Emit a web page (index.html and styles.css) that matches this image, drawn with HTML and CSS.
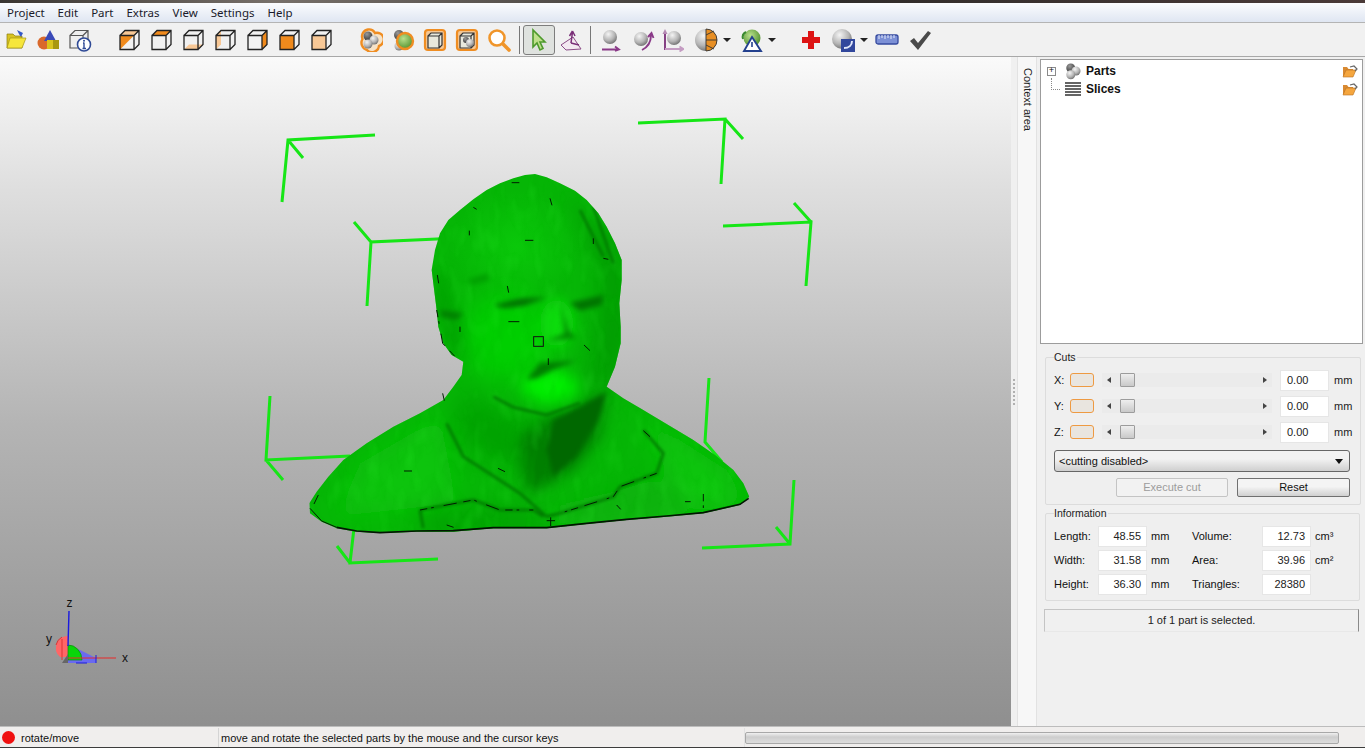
FILE: index.html
```html
<!DOCTYPE html>
<html lang="en">
<head>
<meta charset="utf-8">
<title>Netfabb</title>
<link rel="stylesheet" href="styles.css">
</head>
<body>
<svg class="defs" width="0" height="0">
  <defs>
    <radialGradient id="ball" cx="38%" cy="30%" r="75%"><stop offset="0" stop-color="#f4f4f4"/><stop offset=".6" stop-color="#b4b4b4"/><stop offset="1" stop-color="#6c6c6c"/></radialGradient>
    <radialGradient id="dark" cx="38%" cy="30%" r="75%"><stop offset="0" stop-color="#9a9a9a"/><stop offset="1" stop-color="#333"/></radialGradient>
    <radialGradient id="gball" cx="40%" cy="35%" r="70%"><stop offset="0" stop-color="#b9e08c"/><stop offset="1" stop-color="#4f8f2c"/></radialGradient>
    <radialGradient id="brow" cx="50%" cy="50%" r="50%"><stop offset="0" stop-color="#0ac80a"/><stop offset="1" stop-color="#0ac80a" stop-opacity="0"/></radialGradient>
    <linearGradient id="vp" x1="0" y1="0" x2="0" y2="1"><stop offset="0" stop-color="#fafafa"/><stop offset=".2" stop-color="#dedede"/><stop offset=".55" stop-color="#b4b4b4"/><stop offset="1" stop-color="#8f8f8f"/></linearGradient>
    <filter id="b6" x="-20%" y="-20%" width="140%" height="140%"><feGaussianBlur stdDeviation="38"/></filter>
    <filter id="b4" x="-20%" y="-20%" width="140%" height="140%"><feGaussianBlur stdDeviation="20"/></filter>
    <filter id="b2" x="-20%" y="-20%" width="140%" height="140%"><feGaussianBlur stdDeviation="8"/></filter>
    <filter id="b1" x="-10%" y="-10%" width="120%" height="120%"><feGaussianBlur stdDeviation="4"/></filter>
    <filter id="mott-d" x="0" y="0" width="100%" height="100%">
      <feTurbulence type="fractalNoise" baseFrequency=".03 .012" numOctaves="2" seed="11"/>
      <feColorMatrix values="0 0 0 0 0  0 0 0 0 .45  0 0 0 0 0  2.600 0 0 0 -1.250"/>
    </filter>
    <filter id="mott-l" x="0" y="0" width="100%" height="100%">
      <feTurbulence type="fractalNoise" baseFrequency=".025 .012" numOctaves="2" seed="23"/>
      <feColorMatrix values="0 0 0 0 .03  0 0 0 0 .88  0 0 0 0 .03  0 2.600 0 0 -1.250"/>
    </filter>
    <symbol id="wire" viewBox="0 0 24 24">
      <path d="M3 7.500H17V21.500H3ZM3 7.500L8 2.500H22V16.500L17 21.500M17 7.500L22 2.500" fill="none" stroke="#222" stroke-width="1.300"/>
    </symbol>
    <symbol id="trio" viewBox="0 0 24 24">
      <circle cx="9" cy="8" r="6" fill="url(#dark)"/><circle cx="16" cy="12" r="6" fill="url(#ball)"/><circle cx="9" cy="17" r="6" fill="url(#ball)"/>
    </symbol>
    <symbol id="fold" viewBox="0 0 16 14">
      <path d="M1 3H5L6.500 5H11V12H1Z" fill="#d98a32"/><path d="M1 13L4 6H14L11 13Z" fill="#f5a63e" stroke="#b8701e" stroke-width=".6"/><path d="M8 3L12 2L15 5L13 7" fill="none" stroke="#666" stroke-width="1.200"/>
    </symbol>
  </defs>
</svg>

<div class="titlestrip"></div>

<nav class="menubar">
  <span>Project</span><span>Edit</span><span>Part</span><span>Extras</span><span>View</span><span>Settings</span><span>Help</span>
</nav>

<div class="toolbar">
  <div class="tool"><svg viewBox="0 0 24 24"><path d="M3 6H9L11 8H18V20H3Z" fill="#d8c322" stroke="#8b7b10" stroke-width=".7"/><path d="M3 20L6 10H22L18 20Z" fill="#f6e63c" stroke="#a59414" stroke-width=".7"/><path d="M13 2L19 5L17 9L15 6Z" fill="#3458c8"/></svg></div>
  <div class="tool"><svg viewBox="0 0 24 24"><circle cx="8" cy="15" r="6.500" fill="#d9692c"/><path d="M14 2L20 13H8Z" fill="#3a4ab8"/><path d="M11 12H23V21H11Z" fill="#d9c41e"/><path d="M17 12H23V21H17Z" fill="#a8970f"/></svg></div>
  <div class="tool"><svg viewBox="0 0 24 24"><path d="M2 7.500H15V20H2ZM2 7.500L7 2.500H20V15L15 20M15 7.500L20 2.500" fill="#eee" stroke="#555" stroke-width="1.200"/><circle cx="16" cy="16.500" r="6.500" fill="#fff" stroke="#2f4a96" stroke-width="1.600"/><path d="M16 15V20.500M15 15H16.500M14.500 20.500H18" stroke="#2f4a96" stroke-width="1.400"/><circle cx="16" cy="12.800" r="1" fill="#2f4a96"/></svg></div>

  <div class="tool gap-a"><svg viewBox="0 0 24 24"><path d="M3 7.500L8 2.500H22L17 7.500Z" fill="#f8c896"/><path d="M3 7.500H17L3 21.500Z" fill="#f08a1c"/><use href="#wire"/></svg></div>
  <div class="tool"><svg viewBox="0 0 24 24"><path d="M3 7.500L8 2.500H22L17 7.500Z" fill="#f08a1c"/><use href="#wire"/></svg></div>
  <div class="tool"><svg viewBox="0 0 24 24"><path d="M3 21.500L8 16.500H22L17 21.500Z" fill="#f8c896"/><use href="#wire"/></svg></div>
  <div class="tool"><svg viewBox="0 0 24 24"><path d="M3 7.500L8 2.500V16.500L3 21.500Z" fill="#f8c896"/><use href="#wire"/></svg></div>
  <div class="tool"><svg viewBox="0 0 24 24"><path d="M17 7.500L22 2.500V16.500L17 21.500Z" fill="#f08a1c"/><use href="#wire"/></svg></div>
  <div class="tool"><svg viewBox="0 0 24 24"><path d="M3 7.500H17V21.500H3Z" fill="#f08a1c"/><use href="#wire"/></svg></div>
  <div class="tool"><svg viewBox="0 0 24 24"><path d="M3 7.500H17V21.500H3Z" fill="#f8c896"/><use href="#wire"/></svg></div>

  <div class="tool gap-b"><svg viewBox="0 0 24 24"><path d="M9 1.500A7 7 0 0 1 16 5A6.500 6.500 0 0 1 20 18A7 7 0 0 1 8 22A7.500 7.500 0 0 1 3.500 11A7 7 0 0 1 9 1.500Z" fill="#f6e3c8" stroke="#ef8d22" stroke-width="2.400"/><circle cx="9" cy="8" r="4.500" fill="url(#dark)"/><circle cx="15" cy="12" r="4.500" fill="url(#ball)"/><circle cx="9" cy="16" r="4.500" fill="url(#ball)"/></svg></div>
  <div class="tool"><svg viewBox="0 0 24 24"><circle cx="8" cy="7" r="5" fill="url(#dark)"/><circle cx="8" cy="18" r="4.500" fill="url(#ball)"/><circle cx="14" cy="13" r="8" fill="url(#gball)" stroke="#ef8d22" stroke-width="2.400"/></svg></div>
  <div class="tool"><svg viewBox="0 0 24 24"><rect x="2" y="2" width="20" height="20" rx="3" fill="#f4c794" stroke="#ef8d22" stroke-width="2.200"/><path d="M5 8H16V20H5ZM5 8L8 5H19V17L16 20M16 8L19 5" fill="#e8e8dc" stroke="#333" stroke-width="1.200"/></svg></div>
  <div class="tool"><svg viewBox="0 0 24 24"><rect x="2" y="2" width="20" height="20" rx="3" fill="#f4c794" stroke="#ef8d22" stroke-width="2.200"/><path d="M5 8H16V20H5ZM5 8L8 5H19V17L16 20M16 8L19 5" fill="#e8e8dc" stroke="#333" stroke-width="1.200"/><circle cx="11" cy="12" r="3" fill="url(#dark)"/><circle cx="15" cy="15" r="4" fill="url(#ball)"/></svg></div>
  <div class="tool"><svg viewBox="0 0 24 24"><circle cx="10" cy="10" r="7.500" fill="#fff" stroke="#f0952a" stroke-width="2.600"/><path d="M16 16L22 22" stroke="#f0952a" stroke-width="3.600" stroke-linecap="round"/></svg></div>

  <div class="sep"></div>
  <div class="tool active"><svg viewBox="0 0 24 24"><path d="M6 2V19L10 15L13 22L16 20.500L13 14H18Z" fill="#bfe08c" stroke="#4d9a2c" stroke-width="1.600"/></svg></div>
  <div class="tool"><svg viewBox="0 0 24 24"><path d="M2 17L14 9L22 21L7 22Z" fill="#f3e9f1" stroke="#8a4b86" stroke-width="1"/><path d="M12 15L13.500 4M13.500 3L10.500 8M13.500 3L16 8M12 15L20 17" fill="none" stroke="#7a2f78" stroke-width="1.500"/></svg></div>
  <div class="sep sep-b"></div>

  <div class="tool t-a"><svg viewBox="0 0 24 24"><circle cx="12" cy="9" r="7" fill="url(#ball)"/><path d="M4 21.500H21M17 18.500L21 21.500L17 23" fill="none" stroke="#8a3a88" stroke-width="1.800"/></svg></div>
  <div class="tool t-b"><svg viewBox="0 0 24 24"><circle cx="10" cy="11" r="7" fill="url(#ball)"/><path d="M20 7C20 14 17 19 11 22M17 9L20.500 5L22.500 10" fill="none" stroke="#8a3a88" stroke-width="1.900"/></svg></div>
  <div class="tool t-c"><svg viewBox="0 0 24 24"><circle cx="14" cy="10" r="7" fill="url(#ball)"/><path d="M5 3V21H14" fill="none" stroke="#7a2f78" stroke-width="1.800"/><path d="M5 1L2.500 6H7.500Z" fill="#b58ab3"/><path d="M5 21H23M19.500 18.500L23.500 21L19.500 23.500" fill="none" stroke="#c49cc2" stroke-width="1.800"/></svg></div>
  <div class="tool t-d"><svg viewBox="0 0 24 24"><circle cx="12" cy="12" r="11" fill="url(#ball)"/><path d="M12 1A11 11 0 0 1 12 23Z" fill="#e88f24" stroke="#333" stroke-width=".9"/><path d="M12 7L20 3M12 12H23M12 17L20 21" stroke="#333" stroke-width=".9"/></svg></div>
  <span class="caret c-a"></span>
  <div class="tool t-e"><svg viewBox="0 0 24 24"><circle cx="13" cy="10" r="8.500" fill="url(#gball)"/><path d="M7 4A6 6 0 0 0 4 11" fill="none" stroke="#3b8a30" stroke-width="2"/><path d="M13 9L22 23H5Z" fill="#fff" stroke="#23408e" stroke-width="1.900"/><path d="M13 14V19" stroke="#23408e" stroke-width="1.600"/></svg></div>
  <span class="caret c-a"></span>
  <div class="tool t-f"><svg viewBox="0 0 24 24"><path d="M9 3H15V9H21V15H15V21H9V15H3V9H9Z" fill="#dd1414"/></svg></div>
  <div class="tool t-g"><svg viewBox="0 0 24 24"><circle cx="10" cy="11" r="10" fill="url(#ball)"/><path d="M9 11H23V24H9Z" fill="#31479c"/><path d="M12 20C17 20 20 17 20 13" fill="none" stroke="#dfe6fa" stroke-width="2"/></svg></div>
  <span class="caret"></span>
  <div class="tool t-h"><svg viewBox="0 0 24 24"><rect x="1" y="7" width="22" height="9" rx="2" fill="#7c90d6" stroke="#34499e" stroke-width="1.300"/><path d="M4 7V11M7 7V10M10 7V11M13 7V10M16 7V11M19 7V10" stroke="#e6ebfa" stroke-width="1"/></svg></div>
  <div class="tool t-i"><svg viewBox="0 0 24 24"><path d="M2 13L6 10L10 15L20 3L23 5L10 22Z" fill="#4a4a4a"/></svg></div>
</div>

<main class="main">
  <section class="viewport">
    <svg class="scene" viewBox="0 57 1011 669" preserveAspectRatio="none">
      <rect x="0" y="57" width="1011" height="669" fill="url(#vp)"/>

      <g class="frame">
        <path d="M375 135L288 140L282 202M288 140L303 158"/>
        <path d="M638 123L725 119L721 184M725 119L743 139"/>
        <path d="M723 226L811 222L806 286M811 222L794 203"/>
        <path d="M459 238L371 242L367 306M371 242L354 222"/>
        <path d="M270 396L266 460L350 456M266 460L283 480"/>
        <path d="M709 378L705 442L722 462"/>
        <path d="M354 528L350 563L438 559M350 563L337 546"/>
        <path d="M794 480L790 544L702 548M790 544L776 527"/>
      </g>

      <clipPath id="bustclip">
        <path d="M825 12L860 22L900 40L945 62L980 90L1015 130L1040 170L1065 220L1085 270L1085 330L1078 400L1082 470L1082 520L1065 590L1040 650L1090 685L1150 720L1225 765L1300 810L1365 855L1420 900L1450 940L1468 980L1440 1005L1330 1030L1220 1040L1100 1050L980 1062L860 1075L700 1075L580 1085L470 1085L360 1090L290 1085L230 1075L185 1055L150 1030L148 1000L170 965L205 920L250 870L320 820L400 770L480 730L550 690L580 650L605 615L610 575L575 555L550 520L535 470L530 420L525 380L515 300L525 240L540 190L565 150L600 120L640 88L680 60L720 40L760 25L795 15Z"/>
      </clipPath>

      <g transform="translate(260 170) scale(.33333)">
        <g clip-path="url(#bustclip)">
          <rect x="140" y="0" width="1340" height="1100" fill="#06b606"/>
          <ellipse cx="770" cy="230" rx="200" ry="170" fill="url(#brow)"/>
          <g filter="url(#b6)">
            <path d="M880 20L1100 250L1100 520L1050 660L980 690L1020 480L1030 300L950 120Z" fill="#049604"/>
            <ellipse cx="740" cy="500" rx="130" ry="130" fill="#04cf04"/>
            <path d="M300 880L540 740L590 1000L230 1040Z" fill="#08c408"/>
            <path d="M1150 740L1400 900L1460 990L1320 1030L1220 900Z" fill="#0ac60a"/>
            <path d="M480 1020L840 1030L860 1085L480 1095Z" fill="#059c05"/>
            <path d="M900 1000L1080 960L1200 920L1280 1040L880 1070Z" fill="#07b207"/>
            <path d="M610 660L700 720L860 770L840 920L700 880L570 780Z" fill="#05a205"/>
          </g>
          <g filter="url(#b4)">
            <ellipse cx="890" cy="460" rx="50" ry="70" fill="#0ade0a"/>
            <ellipse cx="870" cy="650" rx="85" ry="50" fill="#06ee06"/>
            <path d="M520 300L555 310L600 450L610 570L560 545L525 420Z" fill="#05a405"/>
            <path d="M780 800L870 740L1040 670L1020 800L940 900L800 980Z" fill="#037f03"/>
          </g>
          <rect x="140" y="0" width="1340" height="1100" filter="url(#mott-d)" opacity=".2"/>
          <rect x="140" y="0" width="1340" height="1100" filter="url(#mott-l)" opacity=".16"/>
          <g filter="url(#b2)">
            <path d="M880 750L960 710L1040 665L1015 750L950 860L880 920L860 840Z" fill="#006800"/>
            <path d="M700 405L780 385L860 382L790 408L730 415Z" fill="#047404"/>
            <path d="M930 398L1030 375L1025 405L960 422Z" fill="#047404"/>
            <path d="M900 395L925 480L950 505L860 512L915 490Z" fill="#058a05"/>
            <path d="M800 628L840 578L950 572L880 598L830 625Z" fill="#047e04"/>
            <path d="M540 420L610 430L590 450L545 440Z" fill="#068006"/>
            <path d="M620 330L680 310L690 330L640 345Z" fill="#06a006"/>
          </g>
          <g class="creases" filter="url(#b1)">
            <path d="M700 680L760 712L860 735L960 700"/>
            <path d="M560 760L610 860L680 905L780 970L860 1040"/>
            <path d="M1150 780L1210 850L1190 910L1080 950L1060 980L900 1030L860 1040"/>
            <path d="M480 1020L640 990L720 1020L820 1020L850 1040"/>
            <path d="M480 1020L490 1075"/>
            <path d="M960 120L1030 260M1000 110L1060 280"/>
          </g>
        </g>
        <g class="specks">
          <path d="M755 38H778M870 85L876 106M640 112L650 118M795 211H820M628 182V196M532 315L536 340M742 348L746 368M745 455H778M1000 205V222M972 525L990 542M865 565V585M175 975L162 1002M432 903H456M714 895L735 905M1150 782L1170 800M1275 995H1292M1070 1005L1082 1018M860 1052H885M872 1042V1068M548 670L553 692M600 470V486M1030 265L1045 268"/>
          <path d="M150 1015L185 1053L230 1072"/>
          <path class="edge" d="M230 1072L290 1083L360 1088L470 1083L580 1082L700 1073L860 1073L980 1060L1100 1048L1220 1038L1330 1028L1440 1003L1466 985"/>
          <path class="dash" d="M1190 910L1080 950L1060 980L900 1030M480 1020L640 990L720 1020L820 1020M560 1065L590 1075M1330 972V1030M530 420L548 520L590 565"/>
        </g>
        <rect x="821" y="500" width="29" height="29" fill="none" stroke="#111" stroke-width="3"/>
      </g>

      <g class="axes">
        <path d="M68 636A12 12 0 0 0 60 657L68 657Z" fill="#f66"/>
        <path d="M56 645A12 12 0 0 1 62 637M62 639V660" fill="none" stroke="#d33" stroke-width="1"/>
        <path d="M68 646L80 650L96 658L96 663H68Z" fill="#6a6af0"/>
        <path d="M68 645A14 15 0 0 1 82 660H68Z" fill="#0ad50a" stroke="#0a8a0a" stroke-width=".7"/>
        <path d="M68 654V663H62Z" fill="#666"/>
        <path d="M69 611L68 646" stroke="#1a1ae0" stroke-width="1.400"/>
        <path d="M68 658H116" stroke="#e82a2a" stroke-width="1.200"/>
        <path d="M76 663H87M96 655V663" stroke="#1a1ae0" stroke-width="1"/>
        <text x="66.500" y="607">z</text>
        <text x="46" y="643">y</text>
        <text x="122" y="662">x</text>
      </g>
    </svg>
  </section>

  <div class="splitter"><span class="grip"></span></div>
  <div class="tabcol"><span class="tablabel">Context area</span></div>

  <aside class="side">
    <div class="tree">
      <div class="node">
        <span class="plus">+</span>
        <svg class="nodeicon"><use href="#trio"/></svg>
        <b>Parts</b>
        <svg class="foldericon"><use href="#fold"/></svg>
      </div>
      <div class="node">
        <span class="elbow"></span>
        <svg class="nodeicon" viewBox="0 0 18 18"><path d="M1 3H17M1 6H17M1 9H17M1 12H17M1 15H17" stroke="#333" stroke-width="1.500"/></svg>
        <b>Slices</b>
        <svg class="foldericon"><use href="#fold"/></svg>
      </div>
    </div>

    <fieldset class="group cuts">
      <legend>Cuts</legend>
      <div class="cutrow">
        <span class="axis">X:</span><span class="swatch"></span>
        <div class="slider"><i class="l"></i><span class="thumb"></span><i class="r"></i></div>
        <span class="field">0.00</span><span class="unit">mm</span>
      </div>
      <div class="cutrow">
        <span class="axis">Y:</span><span class="swatch"></span>
        <div class="slider"><i class="l"></i><span class="thumb"></span><i class="r"></i></div>
        <span class="field">0.00</span><span class="unit">mm</span>
      </div>
      <div class="cutrow">
        <span class="axis">Z:</span><span class="swatch"></span>
        <div class="slider"><i class="l"></i><span class="thumb"></span><i class="r"></i></div>
        <span class="field">0.00</span><span class="unit">mm</span>
      </div>
      <div class="combo"><span>&lt;cutting disabled&gt;</span><i></i></div>
      <div class="actions">
        <span class="btn disabled">Execute cut</span>
        <span class="btn">Reset</span>
      </div>
    </fieldset>

    <fieldset class="group info">
      <legend>Information</legend>
      <div class="infogrid">
        <span>Length:</span><span class="field num">48.55</span><span>mm</span>
        <span>Volume:</span><span class="field num">12.73</span><span>cm³</span>
        <span>Width:</span><span class="field num">31.58</span><span>mm</span>
        <span>Area:</span><span class="field num">39.96</span><span>cm²</span>
        <span>Height:</span><span class="field num">36.30</span><span>mm</span>
        <span>Triangles:</span><span class="field num">28380</span><span></span>
      </div>
    </fieldset>

    <div class="selected">1 of 1 part is selected.</div>
  </aside>
</main>

<footer class="status">
  <div class="st-mode"><span class="dot"></span>rotate/move</div>
  <div class="st-msg">move and rotate the selected parts by the mouse and the cursor keys</div>
  <div class="st-prog"><span class="bar"></span></div>
</footer>
</body>
</html>
```

FILE: styles.css
```css
* { box-sizing: border-box; }
html, body { margin: 0; padding: 0; }
body {
  width: 1365px;
  height: 748px;
  overflow: hidden;
  display: flex;
  flex-direction: column;
  background: #f0f0f0;
  color: #111;
  font: 11px "Liberation Sans", Arial, sans-serif;
}
.defs { flex: none; display: block; }

.titlestrip { flex: 0 0 3px; background: linear-gradient(90deg, #3a3632, #77706a 20%, #2f2c2a 60%, #4a3a38); }

.menubar {
  flex: 0 0 19px;
  display: flex;
  align-items: center;
  padding: 0 0 0 7px;
  gap: 13px;
  font: 11.500px "Noto Sans", sans-serif;
  color: #1a1a2a;
  background: linear-gradient(#fbfcfe, #dfe6f2);
}

.toolbar {
  flex: 0 0 35px;
  display: flex;
  align-items: center;
  background: #f1f1f1;
  border-top: 1px solid #b4b4b4;
  border-bottom: 1px solid #a8a8a8;
}
.tool {
  flex: 0 0 32px;
  height: 30px;
  display: flex;
  align-items: center;
  justify-content: center;
}
.tool svg { width: 24px; height: 24px; display: block; }
.gap-a { margin-left: 17px; }
.gap-b { margin-left: 18px; }
.sep { flex: 0 0 1px; height: 28px; margin: 0 3px 0 4px; background: #777; }
.sep-b { margin: 0 0 0 3px; }
.active { background: #dfe2df; border: 1px solid #7d7d7d; border-radius: 3px; }
.t-a { margin-left: 3px; }
.t-b { margin-left: 1px; }
.t-c { margin-left: -3px; }
.t-d { margin-left: 2px; }
.t-e { margin-left: 4px; }
.t-f { margin-left: 19px; }
.t-g { margin-left: 1px; }
.t-h { margin-left: 7px; flex-basis: 24px; }
.t-i { margin-left: 5px; }
.caret {
  flex: none;
  width: 0;
  height: 0;
  border-left: 4px solid transparent;
  border-right: 4px solid transparent;
  border-top: 4px solid #222;
}
.c-a { margin-left: 1px; }

.main { flex: 1 1 0; min-height: 0; display: flex; }
.viewport { flex: 0 0 1011px; }
.scene { display: block; width: 1011px; height: 100%; }
.frame path { fill: none; stroke: #16e616; stroke-width: 3; }
.creases path { fill: none; stroke: #057a05; stroke-width: 8; }
.specks path { fill: none; stroke: #021c02; stroke-width: 3; }
.specks .edge { stroke-width: 5; stroke: #031503; }
.specks .dash { stroke-width: 3; stroke-dasharray: 22 12 8 30 40 20; }
.axes text { font: 12px "Liberation Sans", sans-serif; fill: #111; }

.splitter { flex: 0 0 6px; display: flex; align-items: center; justify-content: center; background: #f0f0f0; }
.grip { width: 2px; height: 26px; border-left: 2px dotted #b0b0b0; }
.tabcol { flex: 0 0 20px; background: #f7f7f7; border-left: 1px solid #e2e2e2; border-right: 1px solid #e2e2e2; padding: 11px 0 0 4px; }
.tablabel { writing-mode: vertical-rl; font-size: 11px; color: #222; }

.side { flex: 1 1 0; min-width: 0; padding: 2px 2px 0 3px; display: flex; flex-direction: column; background: #f0f0f0; }
.tree {
  flex: 0 0 285px;
  padding: 2px 0 0 6px;
  background: #fff;
  border: 1px solid #9c9c9c;
}
.node { height: 18px; display: flex; align-items: center; }
.node b { font-size: 12px; font-weight: bold; margin-left: 4px; }
.plus {
  flex: 0 0 9px;
  height: 9px;
  margin-right: 7px;
  border: 1px solid #8a8a8a;
  font: 9px/7px "Liberation Mono", monospace;
  text-align: center;
}
.elbow { flex: 0 0 9px; height: 12px; margin: -10px 3px 0 4px; border-left: 1px dotted #888; border-bottom: 1px dotted #888; }
.nodeicon { width: 18px; height: 18px; flex: none; margin-left: 1px; }
.foldericon { width: 16px; height: 14px; margin-left: auto; margin-right: 4px; flex: none; }

.group {
  margin: 0 5px;
  padding: 0 8px;
  border: 1px solid #dcdcdc;
  border-radius: 2px;
  background: #efefef;
}
.group legend { padding: 0 1px 0 0; margin-left: 0; font-size: 10.500px; line-height: 12px; color: #222; background: #f0f0f0; }
.cuts { height: 154px; margin-top: 7px; }
.info { height: 94px; margin-top: 2px; }

.cutrow { height: 26px; display: flex; align-items: center; }
.cutrow:first-of-type { margin-top: 4px; }
.axis { flex: 0 0 16px; }
.swatch { flex: 0 0 24px; height: 14px; border: 1.500px solid #ee9a42; border-radius: 3px; background: #e9e5df; }
.slider {
  flex: 0 0 170px;
  height: 14px;
  margin: 0 8px;
  display: flex;
  align-items: center;
  background: #ebebeb;
}
.slider i { width: 0; height: 0; border-top: 3px solid transparent; border-bottom: 3px solid transparent; }
.slider .l { margin-left: 5px; border-right: 4px solid #444; }
.slider .r { margin-left: auto; margin-right: 5px; border-left: 4px solid #444; }
.thumb { width: 15px; height: 14px; margin-left: 9px; border: 1px solid #9c9c9c; border-radius: 1px; background: linear-gradient(#eee, #c9c9c9); }
.field {
  flex: 0 0 49px;
  height: 21px;
  line-height: 19px;
  padding-left: 6px;
  background: #fff;
  border: 1px solid #e6e6e6;
  color: #222;
}
.unit { margin-left: 5px; color: #222; }
.combo {
  width: 296px;
  height: 22px;
  margin-top: 5px;
  padding: 0 6px 0 4px;
  display: flex;
  align-items: center;
  justify-content: space-between;
  border: 1px solid #666;
  border-radius: 3px;
  background: linear-gradient(#f2f2f2 40%, #cfcfcf);
}
.combo i { width: 0; height: 0; border-left: 4px solid transparent; border-right: 4px solid transparent; border-top: 5px solid #111; }
.actions { width: 296px; margin-top: 6px; display: flex; justify-content: flex-end; gap: 9px; }
.btn {
  flex: 0 0 113px;
  height: 19px;
  line-height: 17px;
  text-align: center;
  border: 1px solid #707070;
  border-radius: 2px;
  background: linear-gradient(#f4f4f4 45%, #d0d0d0);
}
.btn.disabled { flex-basis: 112px; border-color: #c4c4c4; color: #9c9c9c; background: #f2f2f2; }

.infogrid {
  display: grid;
  grid-template-columns: 44px 49px 45px 70px 49px 40px;
  grid-auto-rows: 24px;
  align-items: center;
  margin-top: 5px;
}
.infogrid > span:nth-child(3n) { padding-left: 4px; }
.infogrid .field { height: 21px; padding: 0 5px 0 0; text-align: right; }

.selected {
  height: 23px;
  margin: 8px 4px 0;
  line-height: 21px;
  text-align: center;
  color: #222;
  background: #f0f0f0;
  border: 1px solid #c4c4c4;
  border-right-color: #8a8a8a;
  border-bottom-color: #e8e8e8;
}

.status {
  flex: 0 0 22px;
  display: flex;
  padding-top: 1px;
  background: #f0eeed;
  border-top: 1px solid #bcbcbc;
  border-bottom: 1px solid #3c3c3c;
  font-size: 11px;
  color: #111;
}
.st-mode { flex: 0 0 219px; display: flex; align-items: center; gap: 6px; padding-left: 2px; border-right: 1px solid #d4d4d4; }
.dot { width: 13px; height: 13px; border-radius: 50%; background: #f01010; }
.st-msg { flex: 0 0 525px; display: flex; align-items: center; padding-left: 2px; }
.st-prog { flex: 1; padding: 4px 26px 0 0; border-left: 1px solid #e2e2e2; }
.bar { display: block; height: 12px; border: 1px solid #a8a8a8; border-radius: 2px; background: linear-gradient(#f0f0f0, #cdcdcd 40%, #dddddd); }
```
